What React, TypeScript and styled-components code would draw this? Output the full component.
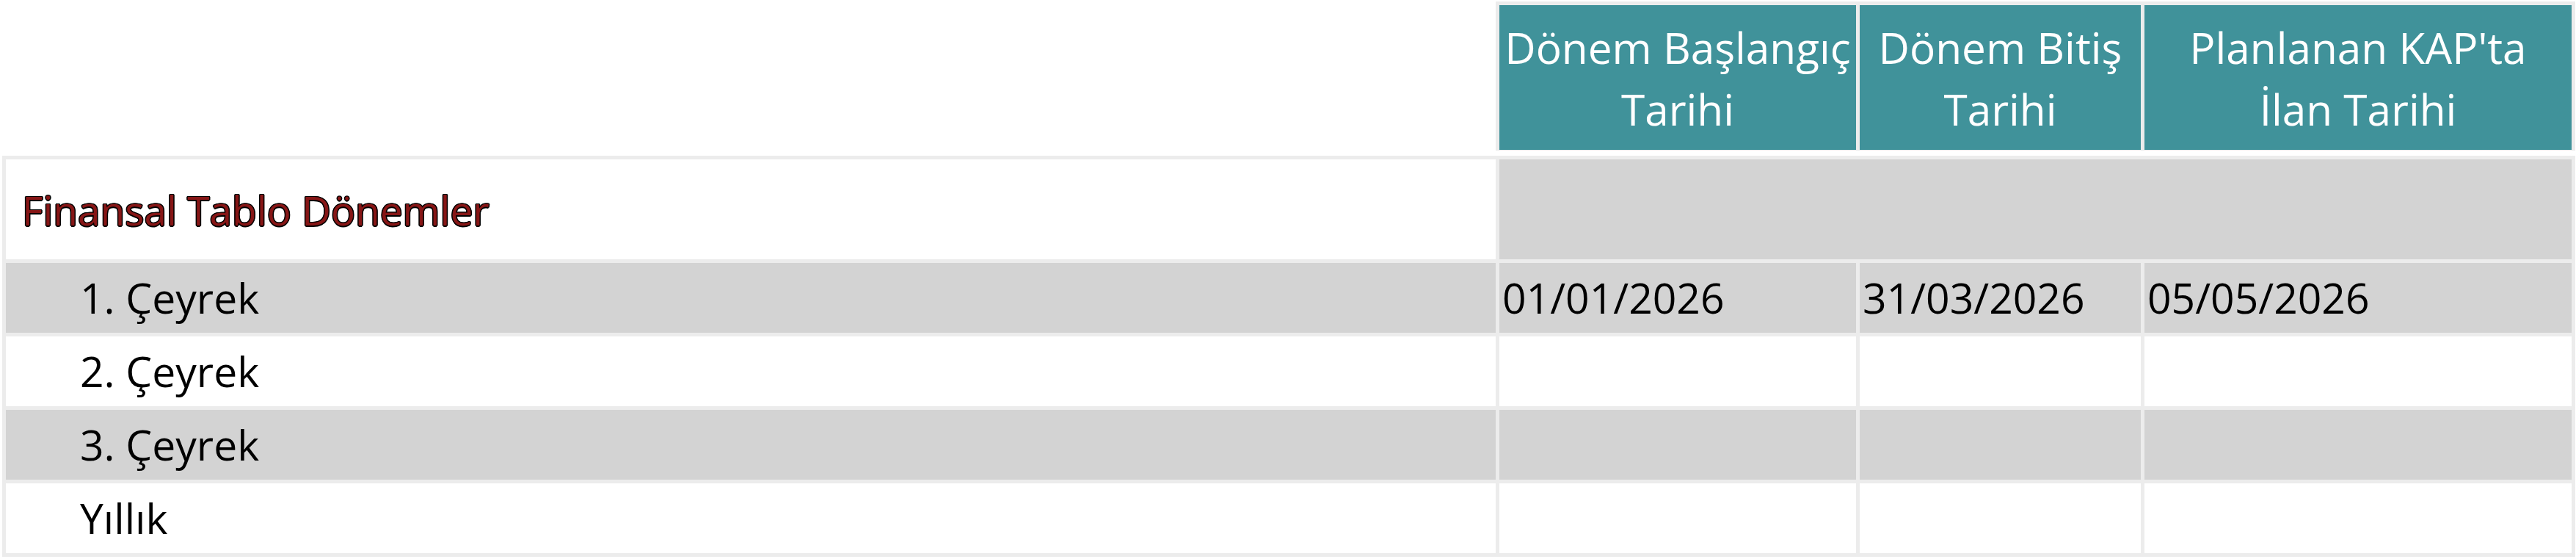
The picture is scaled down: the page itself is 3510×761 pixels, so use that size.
import React from "react";
import styled, { createGlobalStyle } from "styled-components";

const GlobalStyle = createGlobalStyle`
  html, body {
    margin: 0;
    padding: 0;
    background: #ffffff;
  }
  body {
    font-family: "Open Sans", "Noto Sans", "Liberation Sans", sans-serif;
    color: #000000;
  }
`;

const COLS = "2030px 486px 383px 582px";

const Page = styled.div`
  padding: 2px 0 0 3px;
  width: max-content;
`;

const HeaderRow = styled.div`
  display: grid;
  grid-template-columns: 2035px auto;
  margin-bottom: 7px;
`;

const HeaderSpacer = styled.div`
  background: #ffffff;
`;

const HeaderGroup = styled.div`
  display: grid;
  grid-template-columns: 486px 383px 582px;
  column-gap: 5px;
  padding: 5px 0 1px 5px;
  background: #ececec;
`;

const HeaderCell = styled.div`
  height: 197px;
  background: #40929a;
  color: #ffffff;
  font-size: 58.5px;
  line-height: 84px;
  display: flex;
  flex-direction: column;
  align-items: center;
  justify-content: center;
  text-align: center;
  white-space: nowrap;
`;

const Body = styled.div`
  display: grid;
  grid-template-columns: ${COLS};
  grid-template-rows: 136px repeat(4, 95px);
  gap: 5px;
  padding: 5px;
  background: #ececec;
`;

const Cell = styled.div<{ $shade?: boolean; $span?: number; $indent?: number }>`
  background: ${(p) => (p.$shade ? "#d3d3d3" : "#ffffff")};
  grid-column: ${(p) => (p.$span ? `span ${p.$span}` : "auto")};
  padding-left: ${(p) => p.$indent ?? 4}px;
  display: flex;
  align-items: center;
  font-size: 57px;
  line-height: 1;
  white-space: nowrap;
  color: #000000;
`;

const GroupTitle = styled.span`
  font-size: 55px;
  color: #861616;
  text-shadow: -1px -1px 0 #000, 1px -1px 0 #000, -1px 1px 0 #000,
    1px 1px 0 #000, 0 1.5px 0 #000, 0 -1.5px 0 #000, 1.5px 0 0 #000,
    -1.5px 0 0 #000;
`;

type Row = { label: string; start: string; end: string; kap: string };

const rows: Row[] = [
  { label: "1. Çeyrek", start: "01/01/2026", end: "31/03/2026", kap: "05/05/2026" },
  { label: "2. Çeyrek", start: "", end: "", kap: "" },
  { label: "3. Çeyrek", start: "", end: "", kap: "" },
  { label: "Yıllık", start: "", end: "", kap: "" },
];

export default function App() {
  return (
    <>
      <GlobalStyle />
      <Page>
        <HeaderRow>
          <HeaderSpacer />
          <HeaderGroup>
            <HeaderCell>
              <span>Dönem Başlangıç</span>
              <span>Tarihi</span>
            </HeaderCell>
            <HeaderCell>
              <span>Dönem Bitiş</span>
              <span>Tarihi</span>
            </HeaderCell>
            <HeaderCell>
              <span>Planlanan KAP'ta</span>
              <span>İlan Tarihi</span>
            </HeaderCell>
          </HeaderGroup>
        </HeaderRow>
        <Body>
          <Cell $indent={22}>
            <GroupTitle>Finansal Tablo Dönemler</GroupTitle>
          </Cell>
          <Cell $shade $span={3} />
          {rows.map((r, i) => {
            const shade = i % 2 === 0;
            return (
              <React.Fragment key={r.label}>
                <Cell $shade={shade} $indent={101}>{r.label}</Cell>
                <Cell $shade={shade}>{r.start}</Cell>
                <Cell $shade={shade}>{r.end}</Cell>
                <Cell $shade={shade}>{r.kap}</Cell>
              </React.Fragment>
            );
          })}
        </Body>
      </Page>
    </>
  );
}
